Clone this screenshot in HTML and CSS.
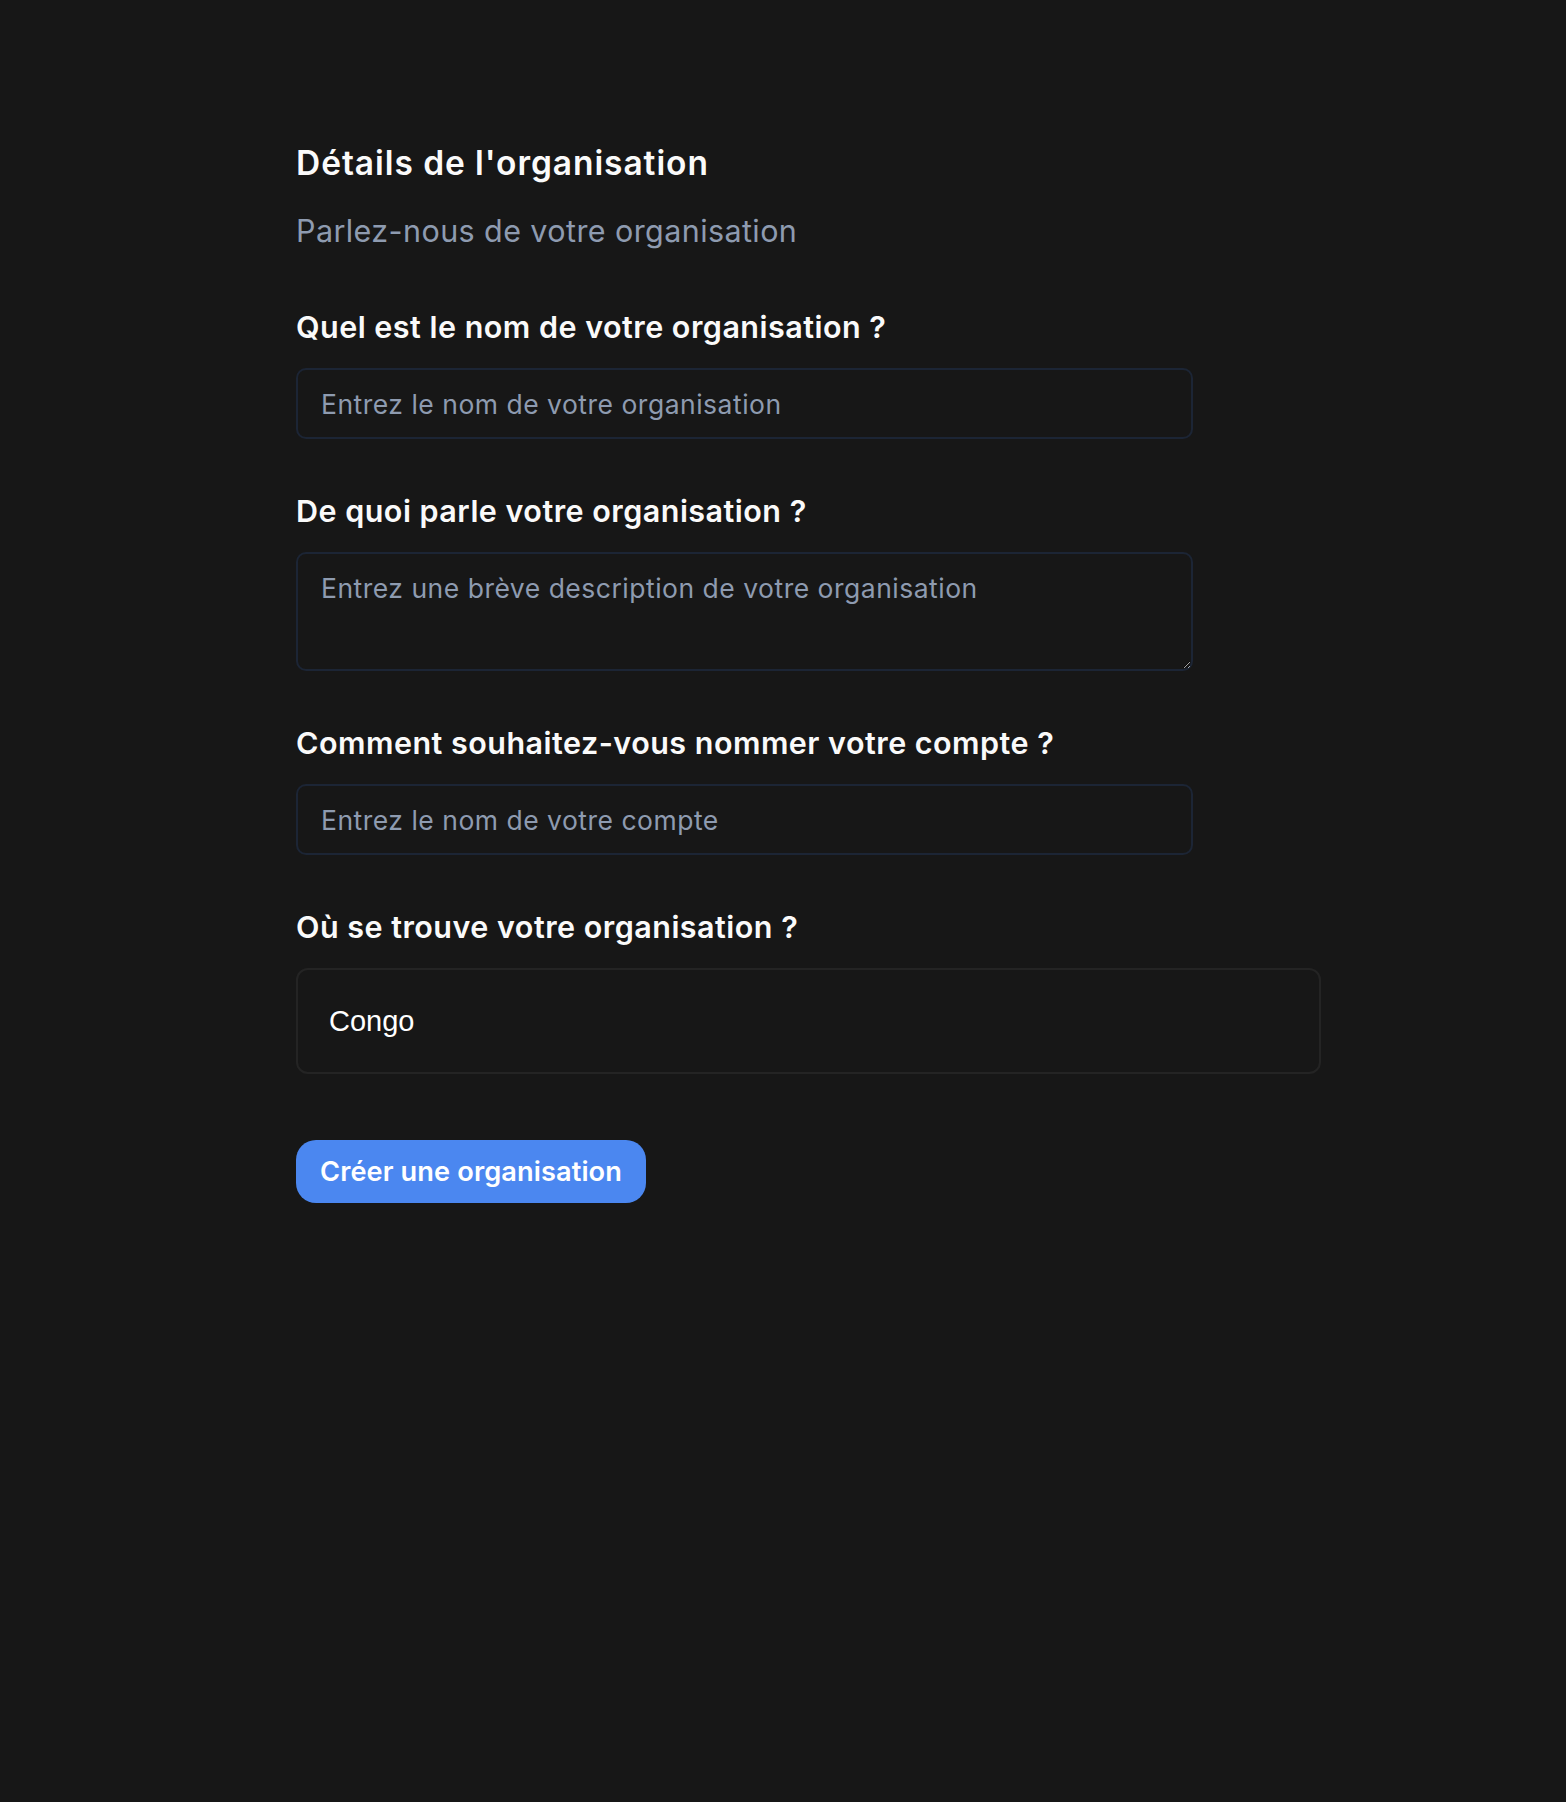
FILE: index.html
```html
<!DOCTYPE html>
<html lang="fr">
<head>
<meta charset="utf-8">
<title>Détails de l'organisation</title>
<link rel="stylesheet" href="styles.css">
</head>
<body>
<main class="page">
  <h1 class="title">Détails de l'organisation</h1>
  <p class="subtitle">Parlez-nous de votre organisation</p>
  <form class="form">
    <div class="field">
      <label class="label" for="org-name">Quel est le nom de votre organisation ?</label>
      <input class="input" id="org-name" type="text" placeholder="Entrez le nom de votre organisation">
    </div>
    <div class="field">
      <label class="label" for="org-desc">De quoi parle votre organisation ?</label>
      <textarea class="input textarea" id="org-desc" placeholder="Entrez une brève description de votre organisation"></textarea>
    </div>
    <div class="field">
      <label class="label" for="acc-name">Comment souhaitez-vous nommer votre compte ?</label>
      <input class="input" id="acc-name" type="text" placeholder="Entrez le nom de votre compte">
    </div>
    <div class="field">
      <label class="label">Où se trouve votre organisation ?</label>
      <div class="select"><span class="select-value">Congo</span></div>
    </div>
    <div class="actions">
      <button class="btn" type="button">Créer une organisation</button>
    </div>
  </form>
</main>
</body>
</html>
```
FILE: styles.css
```css
html {
  color-scheme: dark;
}
html, body {
  margin: 0;
  background: #171717;
}
body {
  font-family: "Inter", "Noto Sans", sans-serif;
  color: #fafafa;
  min-height: 1802px;
}
.page {
  padding: 143px 0 0 296px;
}
.title {
  margin: 0;
  font-size: 33.5px;
  line-height: 40px;
  font-weight: 600;
  letter-spacing: 0.94px;
  color: #fafafa;
}
.subtitle {
  margin: 28px 0 0;
  font-size: 30.5px;
  line-height: 40px;
  font-weight: 400;
  letter-spacing: 0.41px;
  color: #8e9bb0;
}
.form {
  margin-top: 56px;
  display: flex;
  flex-direction: column;
  gap: 52px;
}
.field {
  display: flex;
  flex-direction: column;
  gap: 21px;
}
.label {
  font-size: 30.5px;
  line-height: 40px;
  font-weight: 600;
  letter-spacing: 0.48px;
  color: #fafafa;
}
.input {
  box-sizing: border-box;
  width: 897px;
  height: 71px;
  margin: 0;
  padding: 0 23px;
  background: #171717;
  border: 2px solid #1c2535;
  border-radius: 10px;
  font-family: "Inter", "Noto Sans", sans-serif;
  font-size: 26.5px;
  letter-spacing: 0.5px;
  color: #fafafa;
  outline: none;
}
.input::placeholder {
  color: #8e9bb0;
  opacity: 1;
}
.textarea {
  height: 119px;
  padding: 18px 23px;
  line-height: normal;
  display: block;
}
.select {
  box-sizing: border-box;
  width: 1025px;
  height: 106px;
  border: 2px solid #242424;
  border-radius: 12px;
  background: #171717;
  display: flex;
  align-items: center;
  padding-left: 31px;
}
.select-value {
  font-family: "Liberation Sans", Arial, sans-serif;
  font-size: 29px;
  color: #ffffff;
}
.actions {
  margin-top: 14px;
  display: flex;
}
.btn {
  height: 63px;
  padding: 0 24px;
  border: none;
  border-radius: 20px;
  background: #4b87f0;
  color: #ffffff;
  font-family: "Inter", "Noto Sans", sans-serif;
  font-size: 27.2px;
  font-weight: 600;
  letter-spacing: 0.1px;
  cursor: pointer;
}
```
